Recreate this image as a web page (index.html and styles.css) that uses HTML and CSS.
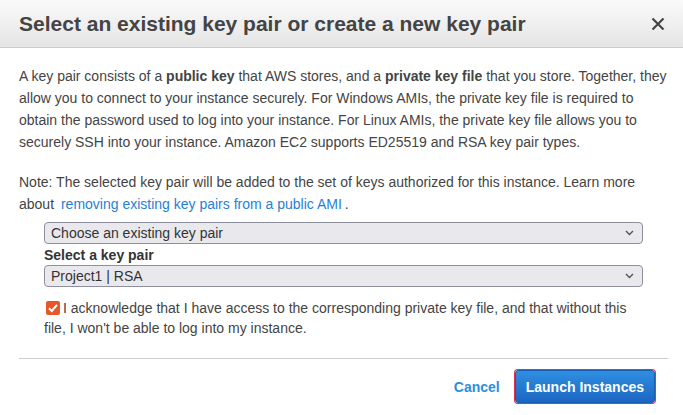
FILE: index.html
```html
<!DOCTYPE html>
<html>
<head>
<meta charset="utf-8">
<link rel="stylesheet" href="styles.css">
</head>
<body>
<div class="modal">
  <div class="modal-header">
    <h1 class="title">Select an existing key pair or create a new key pair</h1>
    <span class="close" aria-label="Close">
      <svg width="14" height="14" viewBox="0 0 14 14"><path d="M1.5 1.5 L12.5 12.5 M12.5 1.5 L1.5 12.5" stroke="#444" stroke-width="2.2" fill="none"/></svg>
    </span>
  </div>
  <div class="modal-body">
    <p class="intro">A key pair consists of a <b>public key</b> that AWS stores, and a <b>private key file</b> that you store. Together, they allow you to connect to your instance securely. For Windows AMIs, the private key file is required to obtain the password used to log into your instance. For Linux AMIs, the private key file allows you to securely SSH into your instance. Amazon EC2 supports ED25519 and RSA key pair types.</p>
    <p class="note">Note: The selected key pair will be added to the set of keys authorized for this instance. Learn more about <a class="link" href="#">removing existing key pairs from a public AMI</a>.</p>
    <div class="fields">
      <div class="select">
        <span>Choose an existing key pair</span>
        <svg class="chev" width="9" height="6" viewBox="0 0 9 6"><path d="M1 1 L4.5 4.5 L8 1" stroke="#555" stroke-width="1.4" fill="none"/></svg>
      </div>
      <div class="label">Select a key pair</div>
      <div class="select">
        <span>Project1 | RSA</span>
        <svg class="chev" width="9" height="6" viewBox="0 0 9 6"><path d="M1 1 L4.5 4.5 L8 1" stroke="#555" stroke-width="1.4" fill="none"/></svg>
      </div>
      <p class="ack"><span class="checkbox"><svg width="14" height="14" viewBox="0 0 14 14"><path d="M3 7.2 L5.8 10 L11 3.8" stroke="#fff" stroke-width="2" fill="none"/></svg></span>I acknowledge that I have access to the corresponding private key file, and that without this file, I won't be able to log into my instance.</p>
    </div>
  </div>
  <div class="modal-footer">
    <a class="cancel" href="#">Cancel</a>
    <button class="primary">Launch Instances</button>
  </div>
</div>
</body>
</html>
```

FILE: styles.css
```css
html, body {
  margin: 0;
  padding: 0;
  background: #fff;
}
body {
  font-family: "Liberation Sans", Arial, sans-serif;
  color: #444;
  font-size: 14px;
}
.modal {
  width: 683px;
  height: 415px;
  overflow: hidden;
}
.modal-header {
  height: 47px;
  border-bottom: 1px solid #ccc;
  background: linear-gradient(#fafafa, #e5e5e5);
  display: flex;
  align-items: center;
  justify-content: space-between;
  padding: 0 18px 0 19px;
}
.title {
  margin: 0;
  font-size: 21px;
  font-weight: bold;
  color: #444;
}
.close {
  display: flex;
  width: 14px;
  height: 14px;
}
.modal-body {
  padding: 17px 15px 0 19px;
}
.intro {
  margin: 0;
  line-height: 22px;
}
.note {
  margin: 18px 0 0;
  line-height: 22px;
}
.link {
  color: #1f7fd8;
  text-decoration: none;
  padding: 0 3px;
}
.fields {
  margin: 7px 25px 0 25px;
}
.select {
  height: 20px;
  border: 1px solid #8f8f9d;
  border-radius: 4px;
  background: #e9e9ed;
  display: flex;
  align-items: center;
  justify-content: space-between;
  padding: 0 8px 0 6px;
  color: #333;
}
.chev {
  display: block;
}
.label {
  font-weight: bold;
  color: #333;
  line-height: 20px;
  margin: 1px 0 0;
}
.ack {
  margin: 11px 0 0;
  line-height: 20px;
}
.checkbox {
  display: inline-block;
  width: 14px;
  height: 14px;
  background: #e8562a;
  border-radius: 2px;
  vertical-align: -2px;
  margin: 0 3px 0 2px;
}
.checkbox svg {
  display: block;
}
.modal-footer {
  margin: 20px 15px 0 19px;
  border-top: 1px solid #ccc;
  display: flex;
  justify-content: flex-end;
  align-items: center;
  padding-top: 11px;
  padding-right: 13px;
  gap: 15px;
}
.cancel {
  color: #2a8fe0;
  font-weight: bold;
  text-decoration: none;
}
.primary {
  font-family: inherit;
  font-size: 14px;
  font-weight: bold;
  color: #fff;
  height: 33px;
  padding: 0 10px;
  border: 1px solid #1a5fb4;
  border-radius: 3px;
  background: linear-gradient(#2f8fe0, #1b66c3);
  box-shadow: 0 0 0 1px #e0304a;
  outline: none;
}
```
